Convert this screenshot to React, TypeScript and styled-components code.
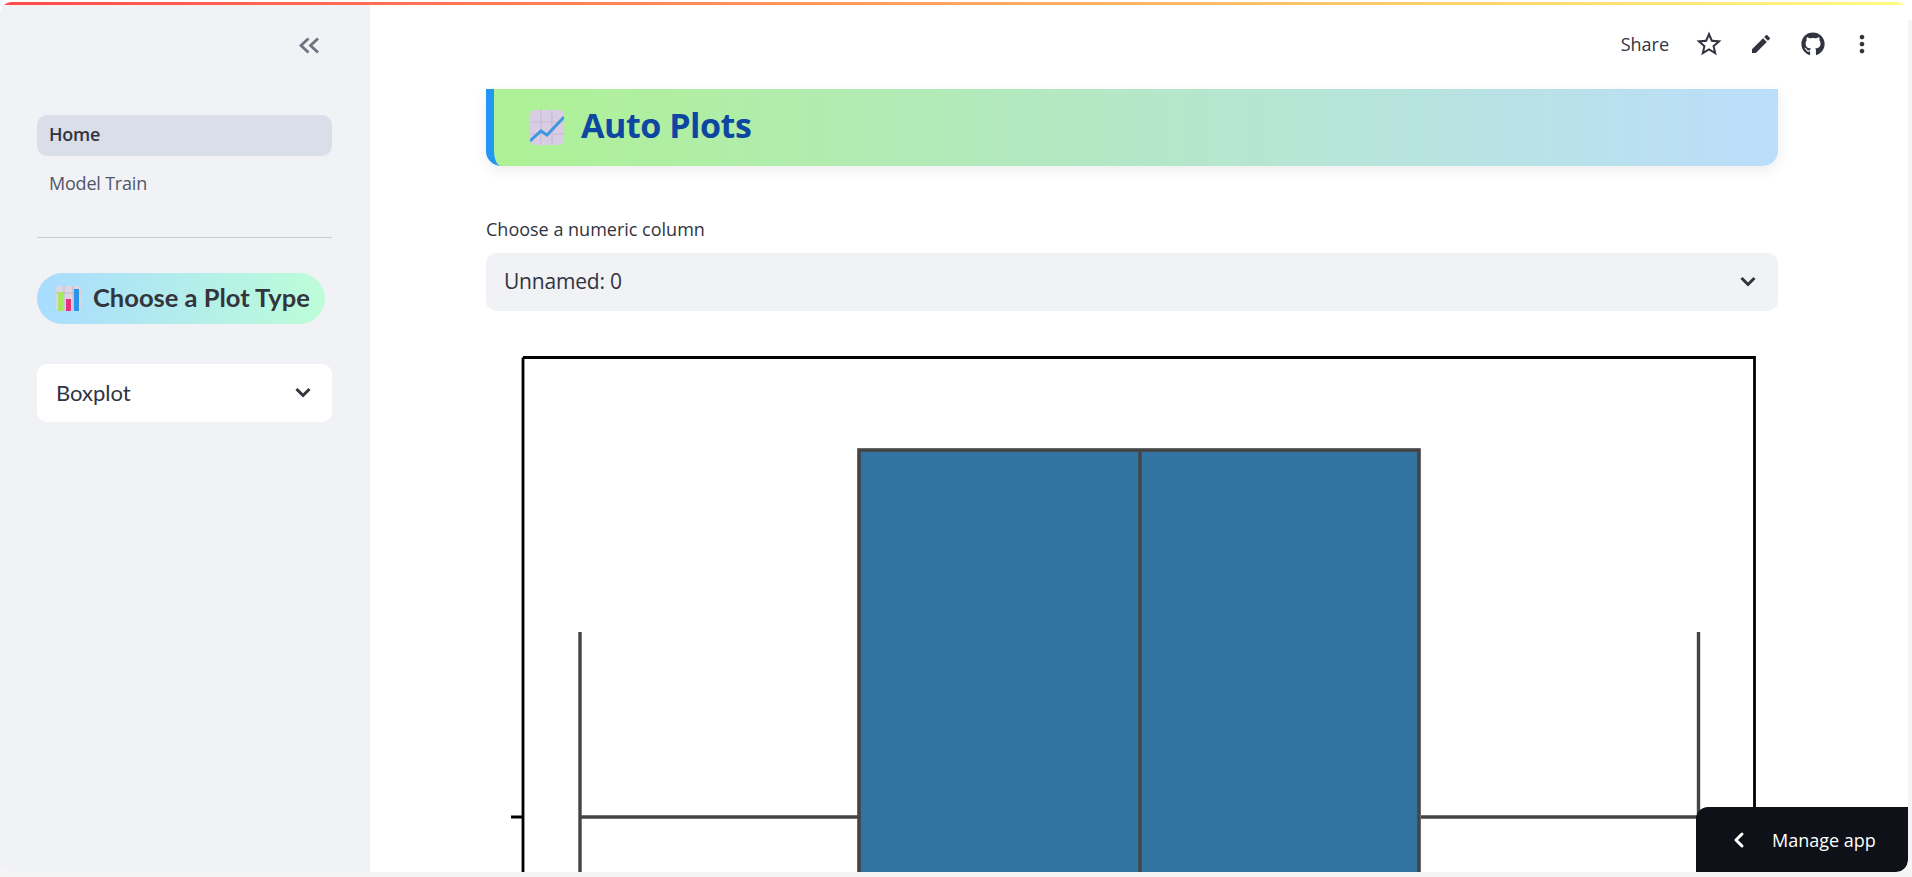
import React from "react"
import styled, { createGlobalStyle } from "styled-components"
import { MdEdit, MdMoreVert, MdStarBorder } from "react-icons/md"
import { FaGithub } from "react-icons/fa"
import { LuChevronLeft } from "react-icons/lu"

const ink = "#31333f"

const GlobalStyle = createGlobalStyle`
  html, body {
    margin: 0;
    height: 100%;
    overflow: hidden;
    background: #f4f4f5;
    font-family: "Open Sans", "Noto Sans", sans-serif;
    color: ${ink};
  }
  * {
    box-sizing: border-box;
  }
`

const Page = styled.div`
  width: 1912px;
  height: 877px;
  padding: 2px 4px 5px 0;
  background: linear-gradient(#ffffff 0 20px, #f4f4f5 20px);
`

const Window = styled.div`
  position: relative;
  height: 100%;
  display: flex;
  flex-direction: column;
  overflow: hidden;
  background: #ffffff;
  border-radius: 12px;
`

const Rainbow = styled.div`
  flex: none;
  height: 3px;
  background: linear-gradient(90deg, #ff4b4b, #ffe270 85%, #fffd80);
`

const Body = styled.div`
  flex: 1;
  min-height: 0;
  display: flex;
`

const Sidebar = styled.aside`
  flex: none;
  width: 370px;
  padding: 0 38px 0 37px;
  background: #f0f2f6;
`

const Collapse = styled.div`
  height: 110px;
  padding: 32px 0 0 261px;
  color: #6f7380;
`

const NavItem = styled.div<{ $active?: boolean }>`
  height: 41px;
  padding: 0 12px ${(p) => (p.$active ? 4 : 2)}px;
  margin-bottom: 7px;
  display: flex;
  align-items: center;
  border-radius: 10px;
  font-size: 18px;
  font-weight: ${(p) => (p.$active ? 600 : 400)};
  letter-spacing: -0.2px;
  color: ${(p) => (p.$active ? ink : "#525668")};
  background: ${(p) => (p.$active ? "#dadee8" : "transparent")};
`

const Divider = styled.hr`
  height: 1px;
  margin: 33px 0 35px;
  border: 0;
  background: #cbccd2;
`

const Pill = styled.div`
  width: 288px;
  height: 51px;
  padding: 0 0 0 19px;
  display: flex;
  align-items: center;
  gap: 12px;
  border-radius: 26px;
  background: linear-gradient(90deg, #a9dcff, #bdfdd8);
  font-family: "Lato", sans-serif;
  font-size: 25.5px;
  font-weight: 700;
  white-space: nowrap;
  color: #33343c;
`

const PillLabel = styled.span`
  margin-bottom: 3px;
`

const Select = styled.div<{ $tinted?: boolean; $pad: number; $size: number; $font?: string }>`
  height: 58px;
  padding: 0 ${(p) => (p.$tinted ? 22 : 21)}px 2px ${(p) => p.$pad}px;
  display: flex;
  align-items: center;
  justify-content: space-between;
  border-radius: 10px;
  background: ${(p) => (p.$tinted ? "#f0f2f6" : "#ffffff")};
  font-family: ${(p) => p.$font || "inherit"};
  font-size: ${(p) => p.$size}px;
  color: ${ink};
  letter-spacing: ${(p) => (p.$tinted ? "-0.2px" : "0")};
`

const SideSelect = styled(Select)`
  margin-top: 40px;
`

const Main = styled.main`
  flex: 1;
  min-width: 0;
  overflow: hidden;
`

const Header = styled.header`
  height: 84px;
  padding: 0 23px 6px 0;
  display: flex;
  align-items: center;
  justify-content: flex-end;
  color: ${ink};
`

const Share = styled.span`
  margin-right: 14px;
  font-size: 18px;
`

const HeaderIcon = styled.span<{ $width: number; $size: number }>`
  width: ${(p) => p.$width}px;
  display: flex;
  justify-content: center;
  font-size: ${(p) => p.$size}px;
`

const Content = styled.div`
  padding: 0 130px 0 116px;
`

const Banner = styled.div`
  height: 77px;
  padding-left: 36px;
  display: flex;
  align-items: center;
  gap: 17px;
  border-left: 8px solid #2196f3;
  border-radius: 0 0 15px 15px;
  background: linear-gradient(90deg, #aef195, #bbdefb);
  box-shadow: 0 4px 14px rgba(0, 0, 0, 0.08);
`

const Title = styled.h1`
  margin: 0 0 6px;
  font-family: "Open Sans", sans-serif;
  font-size: 34px;
  font-weight: 700;
  letter-spacing: -0.45px;
  color: #0d47a1;
`

const FieldLabel = styled.label`
  display: block;
  height: 24px;
  margin: 51px 0 12px;
  font-size: 18px;
  line-height: 24px;
  color: ${ink};
`

const Chart = styled.svg`
  display: block;
  margin-top: 29px;
`

const ManageApp = styled.div`
  position: absolute;
  right: 0;
  bottom: 0;
  width: 212px;
  height: 65px;
  padding-left: 31px;
  display: flex;
  align-items: center;
  gap: 21px;
  border-radius: 12px 0 12px 0;
  background: #0e1117;
  color: #ffffff;
  font-size: 18px;
  white-space: nowrap;
  svg {
    font-size: 24px;
    stroke-width: 3;
  }
`

const DoubleChevron = () => (
  <svg width="22" height="17" viewBox="0 0 22 17" fill="none" stroke="currentColor" strokeWidth="2.8" aria-hidden="true">
    <path d="M10.5 1.5 L3 8.5 L10.5 15.5M20 1.5 L12.5 8.5 L20 15.5" />
  </svg>
)

const ChevronDown = () => (
  <svg width="16" height="11" viewBox="0 0 16 11" fill="none" stroke="currentColor" strokeWidth="3" aria-hidden="true">
    <path d="M1.5 2 L8 8.5 L14.5 2" />
  </svg>
)

const LineChartEmoji = () => (
  <svg width="34" height="35" viewBox="0 0 34 35" aria-hidden="true">
    <rect width="34" height="35" rx="5" fill="#d8cde4" />
    <path d="M0 12H34M0 24H34M11 0V35M22 0V35" stroke="#c6bcd3" strokeWidth="1.2" />
    <path d="M0 31 L11 21 L17 25 L34 7" fill="none" stroke="#3f97e0" strokeWidth="3" />
  </svg>
)

const BarChartEmoji = () => (
  <svg width="25" height="25" viewBox="0 0 25 25" aria-hidden="true">
    <rect width="25" height="25" rx="3" fill="#dcd6e2" />
    <path d="M0 7H25M8 0V25M17 0V25" stroke="#bfb7c8" strokeWidth="1" />
    <rect x="2" y="6" width="5" height="19" fill="#a5e862" />
    <rect x="10" y="13" width="5" height="12" fill="#e9327c" />
    <rect x="18" y="3" width="5" height="22" fill="#2b94e8" />
  </svg>
)

// boxplot, taller than the window: the bottom is cut off by the main area
const BoxPlot = () => (
  <Chart width="1292" height="560" viewBox="0 0 1292 560" aria-hidden="true">
    <path d="M37 17.5H1268.5V560M37 17.5V560M25 477H37" fill="none" stroke="#000" strokeWidth="2.8" />
    <rect x="373" y="110" width="560" height="450" fill="#3274a1" stroke="#444" strokeWidth="3.6" />
    <path d="M654 110V560" stroke="#444" strokeWidth="3.4" />
    <path
      d="M94 292V560M1212.5 292V560M94 477H372M935 477H1212.5"
      fill="none"
      stroke="#444"
      strokeWidth="3.4"
    />
  </Chart>
)

export default function App() {
  return (
    <Page>
      <GlobalStyle />
      <Window>
        <Rainbow />
        <Body>
          <Sidebar>
            <Collapse>
              <DoubleChevron />
            </Collapse>
            <NavItem $active>Home</NavItem>
            <NavItem>Model Train</NavItem>
            <Divider />
            <Pill>
              <BarChartEmoji />
              <PillLabel>Choose a Plot Type</PillLabel>
            </Pill>
            <SideSelect $pad={19} $size={22} $font='"Lato", sans-serif'>
              Boxplot
              <ChevronDown />
            </SideSelect>
          </Sidebar>
          <Main>
            <Header>
              <Share>Share</Share>
              <HeaderIcon $width={52} $size={30}>
                <MdStarBorder />
              </HeaderIcon>
              <HeaderIcon $width={52} $size={24}>
                <MdEdit />
              </HeaderIcon>
              <HeaderIcon $width={52} $size={24}>
                <FaGithub />
              </HeaderIcon>
              <HeaderIcon $width={46} $size={28}>
                <MdMoreVert />
              </HeaderIcon>
            </Header>
            <Content>
              <Banner>
                <LineChartEmoji />
                <Title>Auto Plots</Title>
              </Banner>
              <FieldLabel>Choose a numeric column</FieldLabel>
              <Select $tinted $pad={18} $size={21}>
                Unnamed: 0
                <ChevronDown />
              </Select>
              <BoxPlot />
            </Content>
          </Main>
        </Body>
        <ManageApp>
          <LuChevronLeft />
          Manage app
        </ManageApp>
      </Window>
    </Page>
  )
}
